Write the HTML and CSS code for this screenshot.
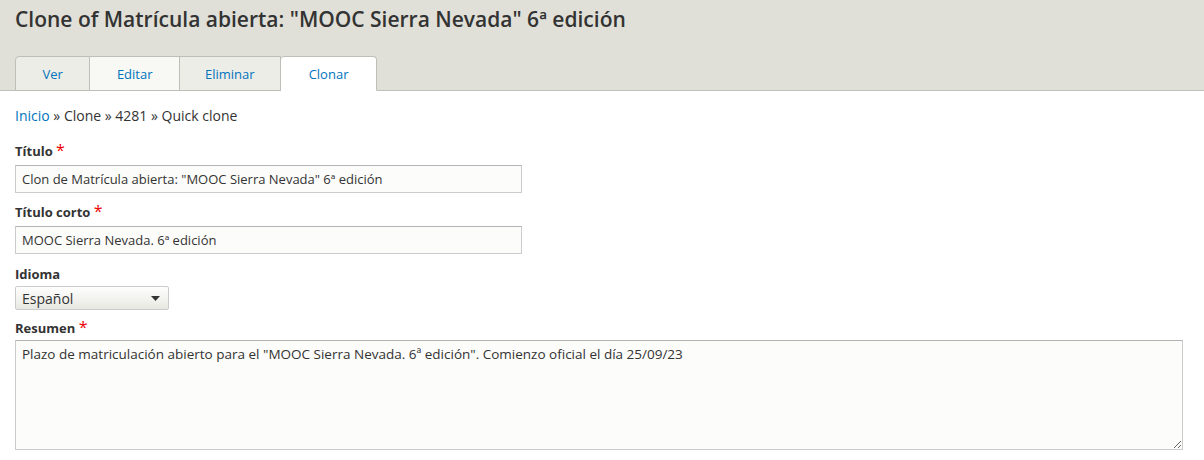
FILE: index.html
```html
<!DOCTYPE html>
<html lang="es">
<head>
<meta charset="utf-8">
<title>Clone</title>
<link rel="stylesheet" href="styles.css">
</head>
<body>
<div class="header">
  <h1 class="page-title">Clone of Matrícula abierta: "MOOC Sierra Nevada" 6ª edición</h1>
  <ul class="tabs">
    <li class="tab first"><a href="#">Ver</a></li>
    <li class="tab"><a href="#">Editar</a></li>
    <li class="tab"><a href="#">Eliminar</a></li>
    <li class="tab active"><a href="#">Clonar</a></li>
  </ul>
</div>
<div class="content">
  <div class="breadcrumb"><a href="#">Inicio</a> » Clone » 4281 » Quick clone</div>
  <div class="form-item first-item">
    <label class="label">Título <span class="req">*</span></label>
    <input class="text" type="text" value='Clon de Matrícula abierta: "MOOC Sierra Nevada" 6ª edición'>
  </div>
  <div class="form-item">
    <label class="label">Título corto <span class="req">*</span></label>
    <input class="text" type="text" value="MOOC Sierra Nevada. 6ª edición">
  </div>
  <div class="form-item item-select">
    <label class="label">Idioma</label>
    <div class="select"><span>Español</span><svg width="9" height="5" viewBox="0 0 9 5"><path d="M0 0H9L4.5 5Z" fill="#333"/></svg></div>
  </div>
  <div class="form-item item-area">
    <label class="label">Resumen <span class="req">*</span></label>
    <textarea class="area" readonly>Plazo de matriculación abierto para el "MOOC Sierra Nevada. 6ª edición". Comienzo oficial el día 25/09/23</textarea>
  </div>
</div>
</body>
</html>
```
FILE: styles.css
```css
* { box-sizing: border-box; }
body {
  margin: 0;
  font-family: "Open Sans", "Liberation Sans", sans-serif;
  font-size: 13px;
  color: #333;
  background: #fff;
}
a { color: #0074bd; text-decoration: none; }
.header {
  background: #e0e0d8;
  padding: 0 15px;
  border-bottom: 1px solid #bebfb9;
}
.page-title {
  margin: 0;
  padding-top: 4px;
  font-size: 21px;
  font-weight: 600;
  line-height: 30px;
  color: #333;
  height: 56px;
}
.tabs {
  list-style: none;
  margin: 0 0 -1px;
  padding: 0;
  display: flex;
}
.tab {
  height: 35px;
  border: 1px solid #bebfb9;
  border-left: none;
  background: #ededE7;
  display: flex;
  align-items: center;
}
.tab:nth-child(2) { background: #f8f8f4; }
.tab.first { border-left: 1px solid #bebfb9; border-top-left-radius: 4px; }
.tab a { padding: 0 26.5px; line-height: 18px; }
.tab:nth-child(3) a { padding: 0 25px; }
.tab.active {
  background: #fff;
  border-bottom-color: #fff;
  border-radius: 4px 4px 0 0;
}
.tab.active a { padding: 0 28px; }
.content { padding: 16px 15px 0; }
.breadcrumb { line-height: 18px; font-size: 14px; }
.form-item { margin-top: 10px; }
.form-item.first-item { margin-top: 17px; }
.label {
  display: block;
  font-weight: 700;
  line-height: 18px;
  margin-bottom: 5px;
}
.req { color: #e00; font-size: 16px; line-height: 10px; font-weight: 400; }
.text {
  display: block;
  width: 507px;
  height: 28px;
  padding: 3px 6px;
  border: 1px solid #ccc;
  border-top-color: #b4b4b4;
  background: #fcfcfa;
  font: inherit;
  color: #333;
  outline: none;
}
.item-select { margin-top: 11px; }
.item-select .label { margin-bottom: 3px; }
.select {
  width: 154px;
  height: 24px;
  border: 1px solid #ccc;
  border-radius: 2px;
  background: linear-gradient(#fefefe, #e8e8e2);
  display: flex;
  align-items: center;
  justify-content: space-between;
  padding: 0 8px 0 6px;
  font-size: 14px;
  color: #333;
}
.item-area { margin-top: 9px; }
.item-area .label { margin-bottom: 3px; }
.area {
  display: block;
  width: 1168px;
  height: 110px;
  padding: 4px 6px;
  border: 1px solid #ccc;
  border-top-color: #b4b4b4;
  background: #fcfcfa;
  font: inherit;
  font-size: 13.5px;
  color: #333;
  resize: vertical;
  outline: none;
  line-height: 18px;
}
```
